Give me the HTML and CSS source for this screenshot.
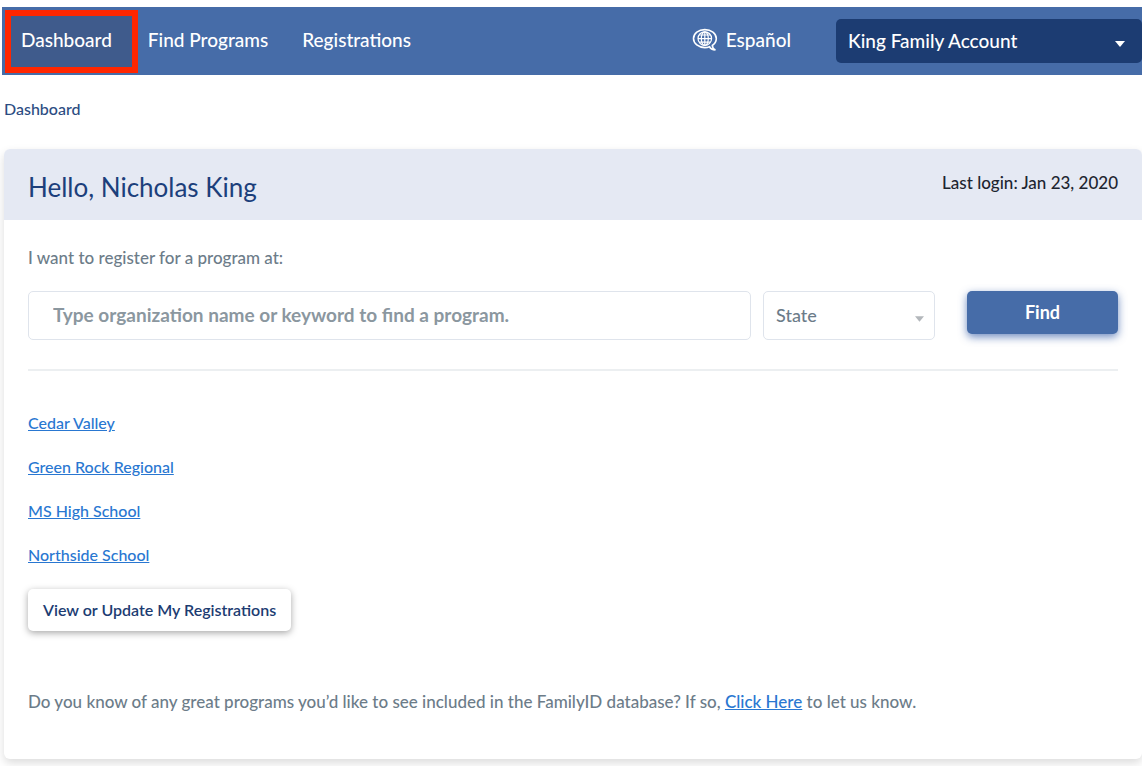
FILE: index.html
```html
<!DOCTYPE html>
<html lang="en">
<head>
<meta charset="utf-8">
<meta name="viewport" content="width=device-width, initial-scale=1">
<title>Dashboard</title>
<link rel="stylesheet" href="styles.css">
</head>
<body>
<div class="page">
  <header class="topbar">
    <nav class="menu">
      <a class="menu-link active" href="#">Dashboard</a>
      <a class="menu-link" href="#">Find Programs</a>
      <a class="menu-link" href="#">Registrations</a>
    </nav>
    <a class="language" href="#">
      <svg class="globe" viewBox="0 0 26 24" fill="none" stroke="currentColor" aria-hidden="true">
        <path stroke-width="1.600" d="M17.500 18.700C16 19.300 14.500 19.600 12.800 19.600C6.500 19.600 1.500 15.600 1.500 10.600S6.500 1.600 12.800 1.600S24.300 5.600 24.300 10.600C24.300 13.400 22.700 15.900 20.300 17.500C20.400 19.400 21.400 20.900 23.400 22C20.800 22 18.500 20.900 17.500 18.700Z"/>
        <g stroke-width="1.200">
          <circle cx="12.800" cy="10.600" r="6.800"/>
          <ellipse cx="12.800" cy="10.600" rx="3.500" ry="6.800"/>
          <path d="M12.800 3.800V17.400M6 10.600H19.600M7.200 7H18.400M7.200 14.200H18.400"/>
        </g>
      </svg>
      Español
    </a>
    <div class="select-box account">
      <select aria-label="Account"><option>King Family Account</option></select>
      <svg class="caret" viewBox="0 0 10 6" aria-hidden="true"><path fill="currentColor" d="M0 0H10L5 6Z"/></svg>
    </div>
  </header>

  <div class="breadcrumb"><a href="#">Dashboard</a></div>

  <main class="card">
    <div class="card-head">
      <h1>Hello, Nicholas King</h1>
      <span class="last-login">Last login: Jan 23, 2020</span>
    </div>
    <div class="card-body">
      <form class="search">
        <label for="keyword">I want to register for a program at:</label>
        <div class="search-row">
          <input id="keyword" type="text" placeholder="Type organization name or keyword to find a program.">
          <div class="select-box state">
            <select aria-label="State"><option>State</option></select>
            <svg class="caret" viewBox="0 0 10 6" aria-hidden="true"><path fill="currentColor" d="M0 0H10L5 6Z"/></svg>
          </div>
          <button class="find" type="button">Find</button>
        </div>
      </form>
      <ul class="programs">
        <li><a href="#">Cedar Valley</a></li>
        <li><a href="#">Green Rock Regional</a></li>
        <li><a href="#">MS High School</a></li>
        <li><a href="#">Northside School</a></li>
      </ul>
      <button class="registrations" type="button">View or Update My Registrations</button>
      <p class="suggest">Do you know of any great programs you’d like to see included in the FamilyID database? If so, <a href="#">Click Here</a> to let us know.</p>
    </div>
  </main>
</div>
</body>
</html>
```
FILE: styles.css
```css
* { box-sizing: border-box; }

body {
  margin: 0;
  background: #fff;
  color: #6c7c89;
  font: 500 17px/24px Lato, "Open Sans", sans-serif;
}

a { color: #2977d1; }

input, select, button { font: inherit; }

.page {
  padding: 7px 0 7px 2px;
  overflow: hidden;
}

.topbar {
  display: flex;
  align-items: center;
  height: 68px;
  padding-left: 3px;
  background: #466ca8;
  color: #fff;
}

.menu { display: flex; align-items: center; }

.menu-link {
  padding: 0 17px 3px;
  color: #fff;
  font-size: 19px;
  text-decoration: none;
}

.menu-link.active {
  margin-right: -7px;
  padding: 12px 20px 15px 10px;
  border: 6px solid #ff2600;
  background: #3f5b8c;
}

.language {
  display: flex;
  align-items: center;
  gap: 8px;
  margin-left: auto;
  padding-bottom: 3px;
  color: #fff;
  font-size: 19px;
  text-decoration: none;
}

.globe { width: 26px; height: 24px; }

.select-box { position: relative; }

.select-box select {
  width: 100%;
  border: 0;
  appearance: none;
  background: transparent;
  color: inherit;
}

.caret {
  position: absolute;
  top: 50%;
  width: 10px;
  height: 6px;
  pointer-events: none;
}

.account {
  width: 306px;
  margin-left: 45px;
  border-radius: 5px;
  background: #1c3c72;
}

.account select {
  height: 44px;
  padding: 0 40px 1px 12px;
  font-size: 19px;
}

.account .caret { right: 17px; }

.breadcrumb { padding: 22px 2px 28px; font-size: 16px; }

.breadcrumb a { color: #2c4c82; text-decoration: none; }

.card {
  margin-left: 2px;
  border-radius: 6px;
  background: #fff;
  box-shadow: 0 4px 10px rgba(0, 0, 0, .14);
}

.card-head {
  display: flex;
  justify-content: space-between;
  padding: 22px 24px 17px;
  border-radius: 6px 6px 0 0;
  background: #e5e9f3;
}

h1 {
  margin: 0;
  color: #1c3f7b;
  font-size: 26px;
  font-weight: 400;
  line-height: 32px;
}

.last-login { color: #1d2530; }

.card-body { padding: 26px 24px 45px; }

.search {
  padding-bottom: 29px;
  border-bottom: 2px solid #eceff1;
}

.search label { display: block; margin-bottom: 21px; }

.search-row { display: flex; align-items: flex-start; }

.search-row input {
  flex: 1;
  min-width: 0;
  height: 49px;
  padding: 0 24px 3px;
  border: 1px solid #dfe4ec;
  border-radius: 5px;
  font-size: 19px;
  font-weight: 700;
}

.search-row input::placeholder { color: #8b979f; opacity: 1; }

.state {
  width: 172px;
  margin: 0 32px 0 12px;
  border: 1px solid #dfe4ec;
  border-radius: 5px;
}

.state select {
  height: 47px;
  padding: 0 32px 1px 12px;
  color: #6c7c89;
  font-size: 18px;
}

.state .caret { right: 10px; width: 9px; color: #b3b7bb; }

.find {
  width: 151px;
  height: 43px;
  padding: 0 0 2px;
  border: 0;
  border-radius: 5px;
  background: #466ca8;
  color: #fff;
  font-size: 18px;
  font-weight: 700;
  box-shadow: 0 3px 8px rgba(50, 90, 165, .7);
}

.programs {
  display: grid;
  gap: 20px;
  margin: 0;
  padding: 40px 0 22px;
  font-size: 16px;
  list-style: none;
}

.registrations {
  height: 42px;
  padding: 0 15px;
  border: 0;
  border-radius: 5px;
  background: #fff;
  color: #1c3c72;
  font-size: 16px;
  font-weight: 600;
  box-shadow: 0 2px 7px rgba(0, 0, 0, .35);
}

.suggest { margin: 59px 0 0; }
```
